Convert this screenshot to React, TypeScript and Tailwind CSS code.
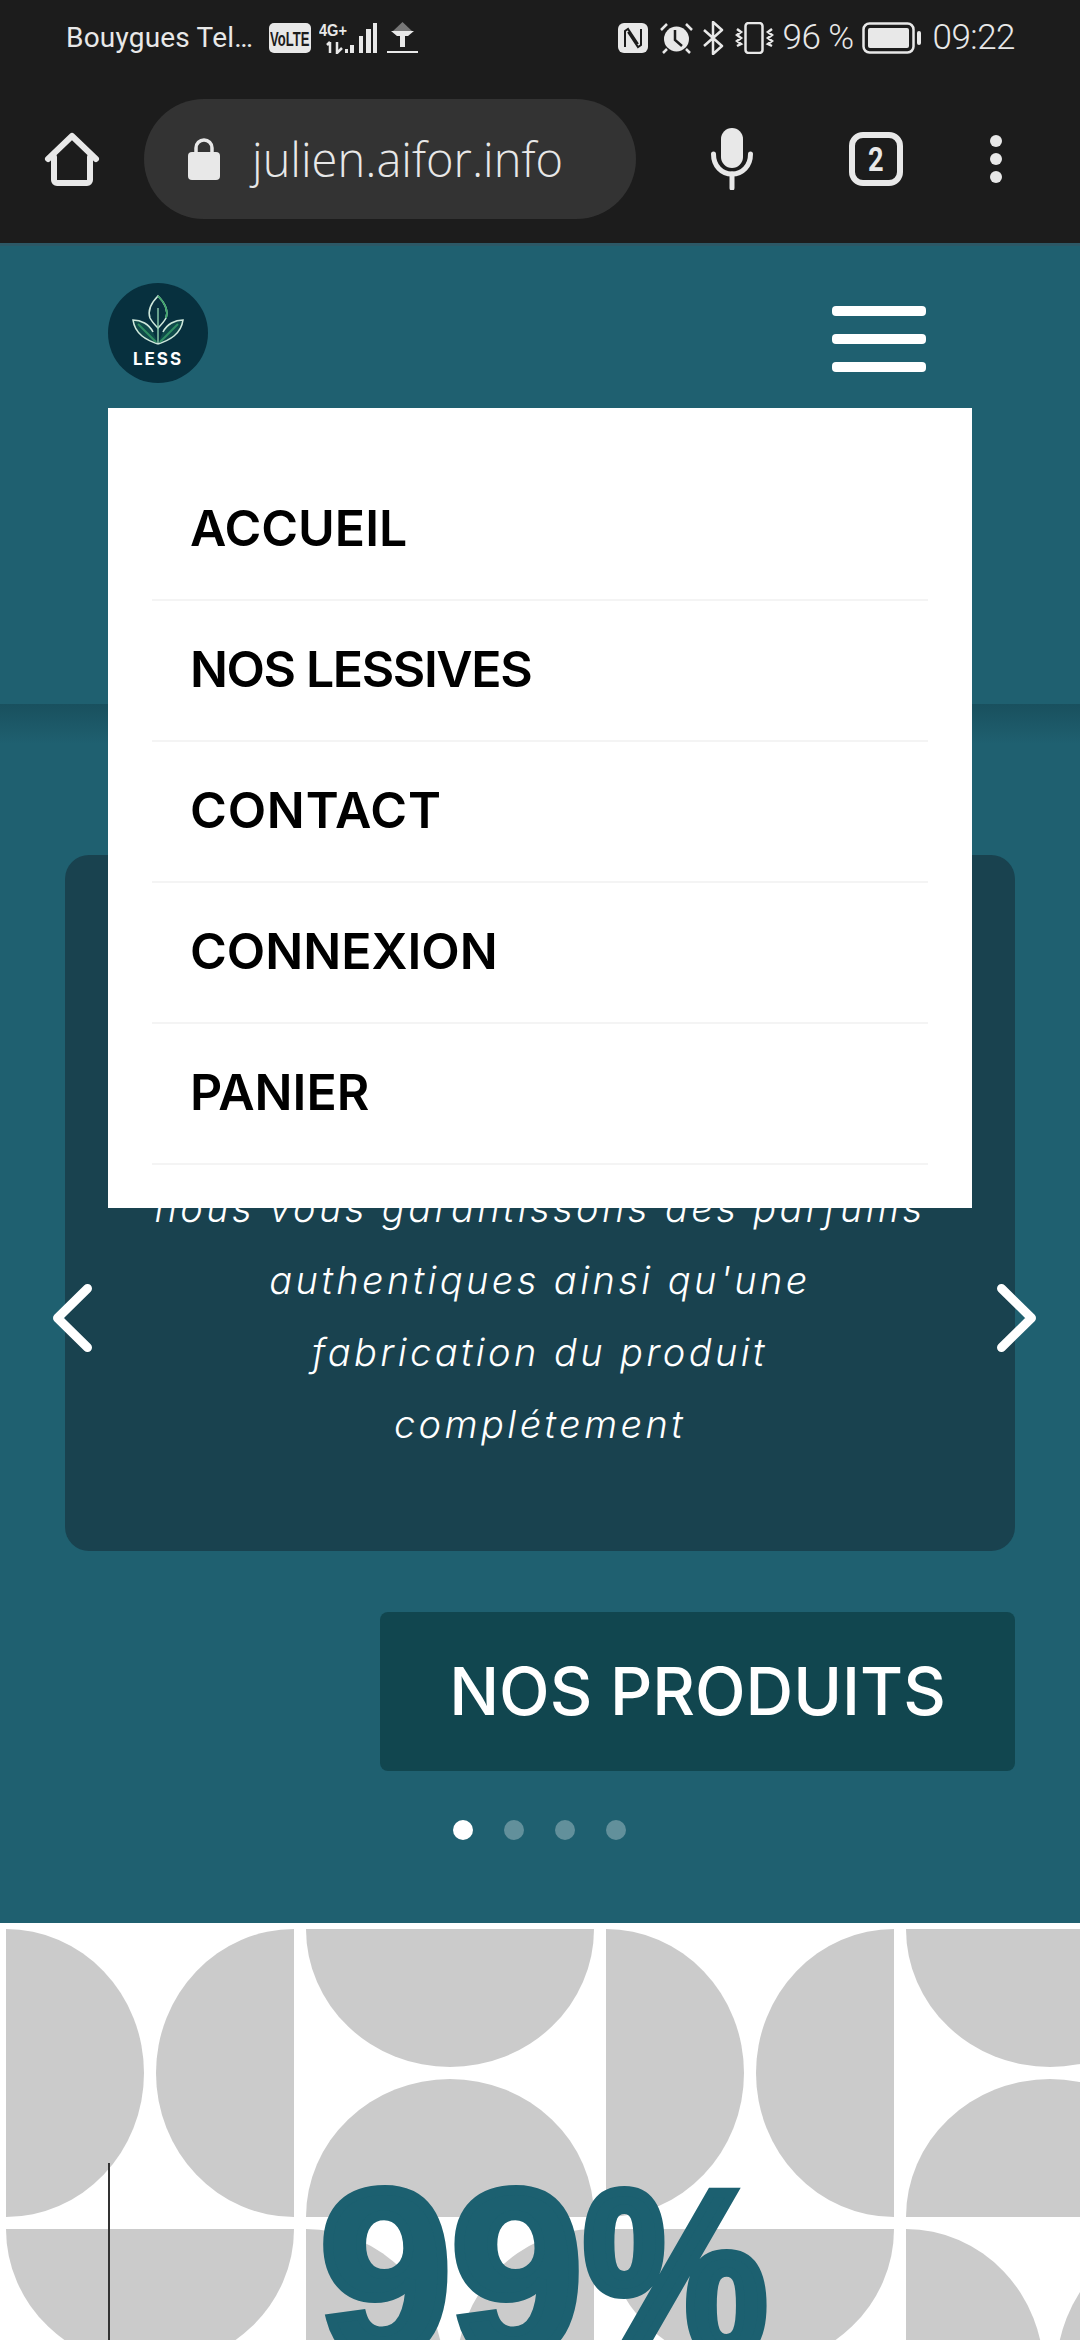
import React from 'react';

const menuItems = [
  { label: 'ACCUEIL', cls: 'tracking-[0px]' },
  { label: 'NOS LESSIVES', cls: 'tracking-[-1.4px]' },
  { label: 'CONTACT', cls: 'tracking-[0.8px]' },
  { label: 'CONNEXION', cls: 'tracking-[0px]' },
  { label: 'PANIER', cls: 'tracking-[0px]' },
];
const heroLines = ['nous vous garantissons des parfums', "authentiques ainsi qu'une", 'fabrication du produit', 'complétement'];

const StatusIcons = () => (
  <div className="flex items-center">
    {/* NFC */}
    <svg width="30" height="32" viewBox="0 0 30 32">
      <rect x="0" y="1" width="30" height="30" rx="6" fill="#e8e8e8" />
      <path d="M7 25V9l3-2 10 15M23 7v16l-3 2L10 10" fill="none" stroke="#1c1c1c" strokeWidth="2" />
    </svg>
    {/* alarm */}
    <svg width="35" height="32" viewBox="0 0 35 32" className="ml-[11px]">
      <circle cx="17.5" cy="17" r="12.5" fill="#e8e8e8" />
      <path d="M16 8v10l7 6" fill="none" stroke="#1c1c1c" strokeWidth="2.5" />
      <path d="M2 8l6-6M33 8l-6-6M4 31l4-4M31 31l-4-4" stroke="#e8e8e8" strokeWidth="2.5" fill="none" />
    </svg>
    {/* bluetooth */}
    <svg width="22" height="34" viewBox="0 0 22 34" className="ml-[8px]">
      <path d="M2 9l18 16-9 8V1l9 8L2 25" fill="none" stroke="#e8e8e8" strokeWidth="2.5" strokeLinejoin="round" />
    </svg>
    {/* vibrate */}
    <svg width="39" height="32" viewBox="0 0 39 32" className="ml-[11px]">
      <rect x="10.5" y="1" width="17" height="30" rx="3" fill="none" stroke="#e8e8e8" strokeWidth="2.5" />
      <path d="M2 7l4 3-4 3 4 3-4 3 4 3-4 2M37 7l-4 3 4 3-4 3 4 3-4 3 4 2" fill="none" stroke="#e8e8e8" strokeWidth="2.5" />
    </svg>
  </div>
);

const SignalIcons = () => (
  <div className="flex items-center">
    <div className="w-[42px] h-[30px] rounded-[5px] bg-[#e8e8e8] flex items-center justify-center overflow-hidden">
      <span className="text-[#1c1c1c] text-[21px] font-bold leading-none font-['Liberation_Sans',sans-serif] scale-x-[0.62] whitespace-nowrap">VoLTE</span>
    </div>
    <svg width="58" height="32" viewBox="0 0 58 32" className="ml-[8px]">
      <text x="0" y="14" fontSize="17" fontWeight="700" fill="#e8e8e8" fontFamily="Liberation Sans, sans-serif" textLength="28" lengthAdjust="spacingAndGlyphs">4G+</text>
      <path d="M11 20v11M8 23l3-3M18 20v11l5-5" stroke="#e8e8e8" strokeWidth="2.5" fill="none" />
      <rect x="26" y="27" width="3" height="4" fill="#e8e8e8" />
      <rect x="31" y="23" width="4" height="8" fill="#e8e8e8" />
      <rect x="40" y="14" width="4" height="17" fill="#e8e8e8" />
      <rect x="47" y="7" width="5" height="24" fill="#e8e8e8" />
      <rect x="54" y="1" width="4" height="30" fill="#e8e8e8" />
    </svg>
    <svg width="31" height="32" viewBox="0 0 31 32" className="ml-[10px]">
      <path d="M15.5 0L6 9h19z" fill="#777" />
      <path d="M4 9h23l-6 5h-3v11h-5V14h-3z" fill="#e8e8e8" />
      <rect x="0" y="29" width="31" height="2" fill="#e8e8e8" />
    </svg>
  </div>
);

const TileV = ({ x, y }: { x: number; y: number }) => (
  <g fill="#cbcbcb">
    <path d={`M${x} ${y}a138 144 0 0 1 0 288z`} />
    <path d={`M${x + 288} ${y}a138 144 0 0 0 0 288z`} />
  </g>
);

const TileH = ({ x, y }: { x: number; y: number }) => (
  <g fill="#cbcbcb">
    <path d={`M${x} ${y}a144 138 0 0 0 288 0z`} />
    <path d={`M${x} ${y + 288}a144 138 0 0 1 288 0z`} />
  </g>
);

const Logo = () => (
  <div className="w-[100px] h-[100px] rounded-full bg-[#07303e] flex flex-col items-center">
    <svg width="56" height="54" viewBox="0 0 56 54" className="mt-[11px]">
      <path d="M3 26c8 0 16 4 20 12l5 12C16 46 5 40 3 26z" fill="#0f4a4a" />
      <path d="M53 26c-8 0-16 4-20 12l-5 12c12-4 23-10 25-24z" fill="#0f4a4a" />
      <path d="M28 2c-8 8-10 16-8 22 2 4 5 7 8 10 3-3 6-6 8-10 2-6 0-14-8-22z" fill="none" stroke="#cfe8dc" strokeWidth="1.6" />
      <path d="M28 2c8 8 10 16 8 22" fill="none" stroke="#3fa76b" strokeWidth="1.6" />
      <path d="M28 14v36" stroke="#8fcfae" strokeWidth="1.4" />
      <path d="M28 50C16 46 5 40 3 26c8 0 16 4 20 12" fill="none" stroke="#cfe8dc" strokeWidth="1.6" />
      <path d="M28 50c12-4 23-10 25-24-8 0-16 4-20 12" fill="none" stroke="#cfe8dc" strokeWidth="1.6" />
      <path d="M8 30c6 6 12 12 18 18M48 30c-6 6-12 12-18 18" stroke="#2f8f63" strokeWidth="2" fill="none" />
    </svg>
    <span className="text-white text-[17px] font-bold tracking-[2px] leading-none mt-[3px] font-['Inter',sans-serif]">LESS</span>
  </div>
);

export default function App() {
  return (
    <div className="relative w-[1080px] h-[2340px] overflow-hidden bg-white font-['Inter',sans-serif]">
      {/* system + browser bars */}
      <div className="h-[246px] bg-[#1c1c1c] border-b-[3px] border-[#2c5866]">
        <div className="h-[76px] pl-[66px] pr-[65px] flex items-center justify-between text-[#e8e8e8] font-['Roboto',sans-serif]">
          <div className="flex items-center gap-[16px]">
            <span className="text-[28px] font-normal tracking-[0.2px]">Bouygues Tel…</span>
            <SignalIcons />
          </div>
          <div className="flex items-center">
            <StatusIcons />
            <span className="text-[35px] font-light ml-[8px] w-[80px] whitespace-nowrap tracking-[-0.5px]">96 %</span>
            <svg width="60" height="32" viewBox="0 0 60 32">
              <rect x="1.5" y="1.5" width="50" height="29" rx="6" fill="none" stroke="#e8e8e8" strokeWidth="2.5" />
              <rect x="6" y="6" width="41" height="20" rx="2" fill="#e8e8e8" />
              <rect x="55" y="9" width="4" height="14" rx="2" fill="#e8e8e8" />
            </svg>
            <span className="text-[35px] font-light ml-[10px] tracking-[-0.5px]">09:22</span>
          </div>
        </div>
        <div className="h-[120px] mt-[23px] flex items-center">
          <svg width="56" height="56" viewBox="0 0 56 56" className="ml-[44px]">
            <path d="M10 26v23a3 3 0 0 0 3 3h30a3 3 0 0 0 3-3V26M4 28L28 5l24 23" fill="none" stroke="#e8e8e8" strokeWidth="6" strokeLinecap="round" strokeLinejoin="round" />
          </svg>
          <div className="w-[492px] h-[120px] ml-[44px] rounded-[60px] bg-[#333333] flex items-center">
            <svg width="32" height="44" viewBox="0 0 32 44" className="ml-[44px]">
              <path d="M8 18v-7a8 8 0 0 1 16 0v7" fill="none" stroke="#e8e8e8" strokeWidth="3.5" />
              <rect x="0" y="15" width="32" height="28" rx="4" fill="#e8e8e8" />
            </svg>
            <span className="ml-[32px] text-[47px] font-light text-[#e8e8e8] font-['Open_Sans',sans-serif] leading-none">julien.aifor.info</span>
          </div>
          <svg width="42" height="62" viewBox="0 0 42 62" className="ml-[75px]">
            <rect x="10" y="0" width="22" height="40" rx="11" fill="#e8e8e8" />
            <path d="M2.5 26c0 12 8 20 18.500 20s18.500-8 18.500-20" fill="none" stroke="#e8e8e8" strokeWidth="5" strokeLinecap="round" />
            <path d="M21 46v14" stroke="#e8e8e8" strokeWidth="5" strokeLinecap="round" />
          </svg>
          <div className="w-[54px] h-[54px] ml-[96px] rounded-[14px] border-[6px] border-[#e8e8e8] flex items-center justify-center">
            <span className="text-[#e8e8e8] text-[34px] font-bold leading-none font-['Roboto',sans-serif] scale-x-[0.8]">2</span>
          </div>
          <div className="ml-[87px] flex flex-col gap-[6px]">
            <div className="w-[12px] h-[12px] rounded-full bg-[#e8e8e8]" />
            <div className="w-[12px] h-[12px] rounded-full bg-[#e8e8e8]" />
            <div className="w-[12px] h-[12px] rounded-full bg-[#e8e8e8]" />
          </div>
        </div>
      </div>

      {/* site header */}
      <div className="h-[458px] bg-[#1f6070] px-[108px] pt-[37px] flex justify-between items-start">
        <Logo />
        <div className="flex flex-col gap-[18px] mr-[46px] mt-[23px]">
          <div className="w-[94px] h-[10px] rounded-[4px] bg-white" />
          <div className="w-[94px] h-[10px] rounded-[4px] bg-white" />
          <div className="w-[94px] h-[10px] rounded-[4px] bg-white" />
        </div>
      </div>

      {/* hero */}
      <div className="relative h-[1219px] bg-[#1f6070] pt-[151px]">
        <div className="absolute left-0 right-0 top-0 h-[40px] bg-gradient-to-b from-[#19505e] to-[#1f6070]" />
        <div className="relative mx-[65px] h-[696px] rounded-[24px] bg-[#19424f] flex flex-col items-center justify-end pb-[91px]">
          {heroLines.map((line) => (
            <p key={line} className="h-[72px] leading-[72px] text-[38px] italic font-light tracking-[3.4px] text-white whitespace-nowrap">
              {line}
            </p>
          ))}
        </div>
        <svg width="39" height="68" viewBox="0 0 39 68" className="absolute left-[53px] top-[580px]">
          <path d="M34.500 4.500L4.500 34l30 29.500" fill="none" stroke="#fff" strokeWidth="9" strokeLinecap="round" strokeLinejoin="round" />
        </svg>
        <svg width="39" height="68" viewBox="0 0 39 68" className="absolute left-[997px] top-[580px]">
          <path d="M4.500 4.500L34.500 34l-30 29.500" fill="none" stroke="#fff" strokeWidth="9" strokeLinecap="round" strokeLinejoin="round" />
        </svg>
        <div className="ml-[380px] mt-[61px] w-[635px] h-[159px] rounded-[8px] bg-[#11464f] flex items-center justify-center">
          <span className="text-[66px] font-medium text-white leading-none whitespace-nowrap -mt-[2px]">NOS PRODUITS</span>
        </div>
        <div className="mt-[49px] flex justify-center gap-[31px] pr-[1px]">
          <div className="w-[20px] h-[20px] rounded-full bg-white" />
          <div className="w-[20px] h-[20px] rounded-full bg-white/30" />
          <div className="w-[20px] h-[20px] rounded-full bg-white/30" />
          <div className="w-[20px] h-[20px] rounded-full bg-white/30" />
        </div>
      </div>

      {/* pattern section */}
      <div className="relative h-[417px] overflow-hidden pl-[320px] pt-[232px]">
        <svg width="1080" height="417" viewBox="0 1923 1080 417" className="absolute left-0 top-0">
          <TileV x={6} y={1929} />
          <TileH x={306} y={1929} />
          <TileV x={606} y={1929} />
          <TileH x={906} y={1929} />
          <TileH x={6} y={2229} />
          <TileV x={306} y={2229} />
          <TileH x={606} y={2229} />
          <TileV x={906} y={2229} />
        </svg>
        <div className="absolute left-[108px] top-[240px] w-[2px] h-[177px] bg-[#333333]" />
        <div className="relative text-[236px] leading-[236px] font-bold text-[#1c6070] font-['Liberation_Sans',sans-serif] [-webkit-text-stroke:10px_#1c6070] whitespace-nowrap">
          99<span className="inline-block origin-left scale-x-[0.88]">%</span>
        </div>
      </div>

      {/* open dropdown menu */}
      <div className="absolute left-[108px] top-[408px] w-[864px] h-[800px] bg-white pt-[52px] px-[44px]">
        {menuItems.map((item) => (
          <div key={item.label} className="h-[141px] border-b-2 border-[#f4f4f4] flex items-center pl-[38px]">
            <span className={`text-[50px] font-semibold text-black leading-none whitespace-nowrap -mt-[3px] ${item.cls}`}>{item.label}</span>
          </div>
        ))}
      </div>
    </div>
  );
}
